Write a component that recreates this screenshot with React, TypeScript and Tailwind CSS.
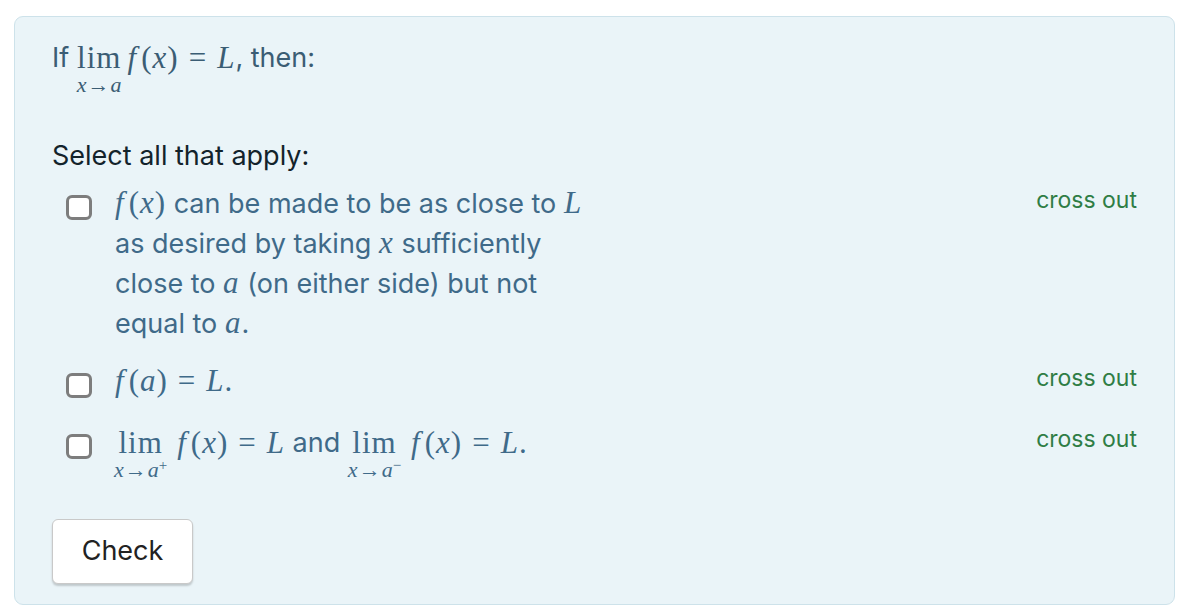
import React from "react";

const sans = "font-['Inter','Liberation_Sans',sans-serif]";
const serif = "font-['Liberation_Serif','Times_New_Roman',serif]";

const I: React.FC<{ children: React.ReactNode }> = ({ children }) => (
  <span className="italic">{children}</span>
);

const F = () => <span className="italic mr-[4px]">f</span>;

const Eq = () => <span className="mx-[10px] not-italic">=</span>;

const Arrow = () => <span className="mx-[1px] not-italic">→</span>;

// a "lim" with its subscript underneath
const Lim: React.FC<{ sub: React.ReactNode }> = ({ sub }) => (
  <span className="inline-flex flex-col items-center align-top">
    <span className="leading-[40px]">lim</span>
    <span className="text-[22px] leading-none -mt-[4px] italic tracking-normal">{sub}</span>
  </span>
);

const Math: React.FC<{ children: React.ReactNode }> = ({ children }) => (
  <span className={`${serif} text-[31px] leading-none tracking-[1px]`}>{children}</span>
);

const Fx = () => (
  <>
    <F />(<I>x</I>)
  </>
);

const Checkbox = () => (
  <span className="mt-[11px] ml-[14px] w-[26px] h-[25px] shrink-0 rounded-[6px] border-[3px] border-[#7d7d7d] bg-white" />
);

const CrossOut = () => (
  <button className="ml-auto text-[23px] leading-[32px] text-[#2f7d45] shrink-0">cross out</button>
);

export default function App() {
  return (
    <div className={`bg-white w-[1189px] h-[608px] pt-[16px] px-[14px] ${sans}`}>
      <div className="w-[1161px] h-[589px] rounded-[9px] border border-[#cde2ea] bg-[#eaf4f8] pl-[37px] pr-[37px] pt-[21px]">
        <div className="flex items-start text-[27px] leading-[40px] text-[#3b5d74]">
          <span>If&nbsp;</span>
          <Math>
            <span className="inline-flex items-start">
              <Lim sub={<>x<Arrow />a</>} />
              <span className="leading-[40px] ml-[6px]">
                <Fx /><Eq /><I>L</I>
              </span>
            </span>
          </Math>
          <span>, then:</span>
        </div>

        <div className="mt-[40px] text-[27px] leading-[40px] text-[#13232b]">Select all that apply:</div>

        <div className="mt-[8px] flex items-start text-[27px] leading-[40px] text-[#3f6a89]">
          <Checkbox />
          <div className="ml-[23px] w-[495px]">
            <Math><Fx /></Math> can be made to be as close to <Math><I>L</I></Math> as desired by taking{" "}
            <Math><I>x</I></Math> sufficiently close to <Math><I>a</I></Math> (on either side) but not equal to{" "}
            <Math><I>a</I></Math>.
          </div>
          <CrossOut />
        </div>

        <div className="mt-[18px] flex items-start text-[27px] leading-[40px] text-[#3f6a89]">
          <Checkbox />
          <div className="ml-[23px]">
            <Math>
              <F />(<I>a</I>)<Eq /><I>L</I>.
            </Math>
          </div>
          <CrossOut />
        </div>

        <div className="mt-[21px] flex items-start text-[27px] leading-[40px] text-[#3f6a89]">
          <Checkbox />
          <div className="ml-[22px] flex items-start">
            <Math>
              <span className="inline-flex items-start">
                <Lim sub={<>x<Arrow />a<sup className="not-italic text-[15px]">+</sup></>} />
                <span className="leading-[40px] ml-[10px]">
                  <Fx /><Eq /><I>L</I>
                </span>
              </span>
            </Math>
            <span>&nbsp;and&nbsp;</span>
            <Math>
              <span className="inline-flex items-start">
                <Lim sub={<>x<Arrow />a<sup className="not-italic text-[15px]">−</sup></>} />
                <span className="leading-[40px] ml-[10px]">
                  <Fx /><Eq /><I>L</I>.
                </span>
              </span>
            </Math>
          </div>
          <CrossOut />
        </div>

        <button className="mt-[38px] w-[141px] h-[65px] rounded-[6px] border border-[#c9c9c9] bg-white text-[27px] text-[#222] shadow-[0_2px_2px_rgba(0,0,0,0.18)]">
          Check
        </button>
      </div>
    </div>
  );
}
